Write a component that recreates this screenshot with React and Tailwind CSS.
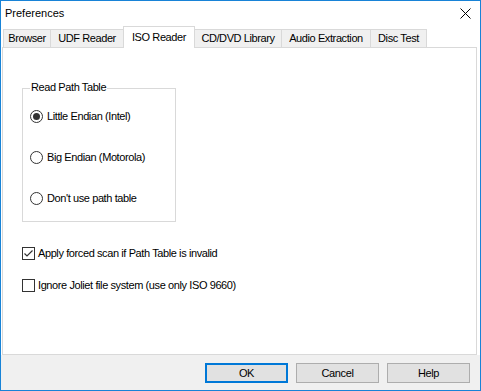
const tabs = [
  { label: 'Browser', w: 'w-[48px]' },
  { label: 'UDF Reader', w: 'w-[74px]' },
  { label: 'ISO Reader', w: 'w-[72px]', active: true },
  { label: 'CD/DVD Library', w: 'w-[88px]' },
  { label: 'Audio Extraction', w: 'w-[90px]' },
  { label: 'Disc Test', w: 'w-[57px]' },
];

const Radio = ({ checked, label }) => (
  <label className="flex items-center h-[14px]">
    <span className="w-[13px] h-[13px] rounded-full border border-[#333] bg-white flex items-center justify-center">
      {checked && <span className="w-[7px] h-[7px] rounded-full bg-[#333]" />}
    </span>
    <span className="ml-[4px]">{label}</span>
  </label>
);

const Check = ({ checked, label }) => (
  <label className="flex items-center h-[14px]">
    <span className="w-[13px] h-[13px] border border-[#333] bg-white flex items-center justify-center">
      {checked && (
        <svg width="11" height="11" viewBox="0 0 11 11">
          <path d="M1.5 5.5 L4 8 L9.5 2.5" fill="none" stroke="#333" strokeWidth="1.2" />
        </svg>
      )}
    </span>
    <span className="ml-[3px]">{label}</span>
  </label>
);

const Button = ({ children, primary }) => (
  <button
    className={`w-[83px] h-[20px] bg-[#e1e1e1] flex items-center justify-center ${
      primary ? 'border-2 border-[#0078d7]' : 'border border-[#adadad]'
    }`}
  >
    {children}
  </button>
);

export default function App() {
  return (
    <div className="w-[481px] h-[391px] border border-[#1883d7] bg-[#f0f0f0] flex flex-col text-[11px] text-black font-['Liberation_Sans',Arial,sans-serif] leading-none tracking-[-0.4px]">
      {/* Title bar */}
      <div className="h-[25px] bg-white flex items-center justify-between pl-[4px] pr-[9px]">
        <span className="tracking-normal">Preferences</span>
        <svg width="11" height="11" viewBox="0 0 11 11">
          <path d="M0.5 0.5 L10.5 10.5 M10.5 0.5 L0.5 10.5" stroke="#000" strokeWidth="1" />
        </svg>
      </div>

      <div className="flex-1 flex flex-col bg-white">
        {/* Tabs */}
        <div className="h-[21px] flex items-end pl-[2px]">
          {tabs.map((t, i) => (
            <div
              key={t.label}
              className={`${t.w} ${i > 0 ? '-ml-px' : ''} border-t border-l border-r border-[#d9d9d9] flex items-center justify-center ${
                t.active ? 'h-[22px] -mb-px bg-white relative z-10 pb-[1px]' : 'h-[18px] bg-[#f0f0f0]'
              }`}
            >
              {t.label}
            </div>
          ))}
        </div>

        {/* Panel */}
        <div className="flex-1 ml-[1px] mr-[3px] border border-[#d9d9d9] bg-white pl-[19px] pt-[40px]">
          <div className="relative w-[154px] h-[134px] border border-[#d9d9d9] pl-[7px] pt-[20px]">
            <span className="absolute -top-[7px] left-[7px] bg-white px-px">Read Path Table</span>
            <div className="flex flex-col gap-[27px]">
              <Radio checked label="Little Endian (Intel)" />
              <Radio label="Big Endian (Motorola)" />
              <Radio label="Don't use path table" />
            </div>
          </div>
          <div className="flex flex-col gap-[18px] mt-[24px]">
            <Check checked label="Apply forced scan if Path Table is invalid" />
            <Check label="Ignore Joliet file system (use only ISO 9660)" />
          </div>
        </div>
      </div>

      {/* Footer */}
      <div className="h-[35px] flex justify-end gap-[8px] pr-[10px] pt-[8px]">
        <Button primary>OK</Button>
        <Button>Cancel</Button>
        <Button>Help</Button>
      </div>
    </div>
  );
}
